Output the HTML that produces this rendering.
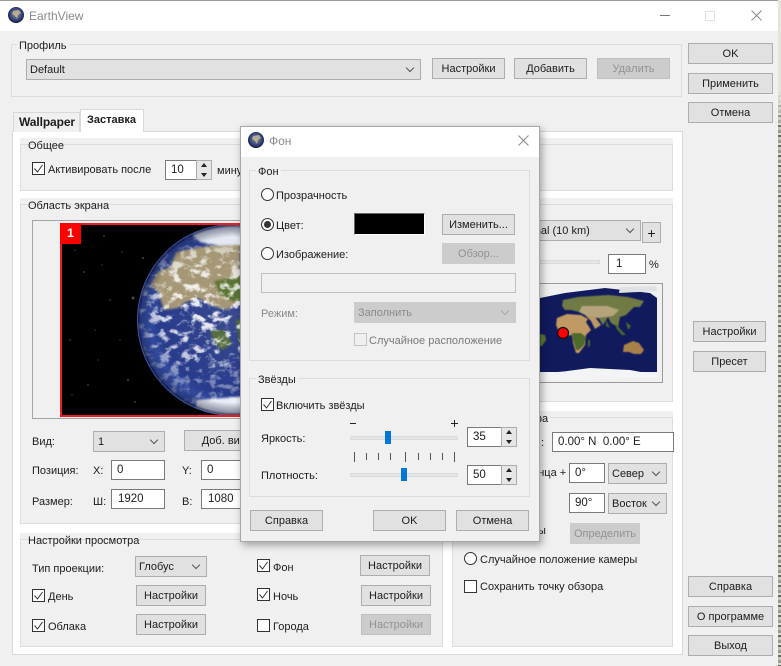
<!DOCTYPE html>
<html lang="ru"><head><meta charset="utf-8"><title>EarthView</title>
<style>
*{box-sizing:border-box}
html,body{margin:0;padding:0;width:781px;height:666px;overflow:hidden;background:#f0f0f0}
body{position:relative;font:11px/14px "Liberation Sans",sans-serif;color:#1c1c1c;filter:blur(.3px)}
div,span,svg{position:absolute}
.t{white-space:nowrap;line-height:14px;margin-top:1px}
.b{background:#e1e1e1;border:1px solid #adadad;text-align:center;line-height:21px;white-space:nowrap;color:#1c1c1c}
.d{background:#cccccc;border-color:#bfbfbf;color:#929292}
.c{background:#e1e1e1;border:1px solid #adadad;line-height:21px;padding-left:3px;white-space:nowrap;overflow:hidden}
.c:after{content:"";position:absolute;right:7px;top:5px;width:5px;height:5px;border-right:1px solid #555;border-bottom:1px solid #555;transform:rotate(45deg)}
.cd{background:#ccc;border-color:#ccc;color:#8a8a8a}.cd:after{border-color:#aaa}
.i{background:#fff;border:1px solid #7a7a7a;line-height:19px;padding-left:5px;white-space:nowrap;overflow:hidden;font-size:11.5px}
.f{background:#f0f0f0}
.g{border:1px solid #dcdcdc}
.l{background:#f0f0f0;padding:0 2px;white-space:nowrap}
.k{width:13px;height:13px;border:1px solid #333;background:#fff}
.k svg{left:0;top:0}
.r{width:13px;height:13px;border:1px solid #333;border-radius:50%;background:#fff}
.r i{position:absolute;left:2px;top:2px;width:7px;height:7px;border-radius:50%;background:#333}
.s{background:#e6e6e6;border:1px solid #adadad}
.s:before{content:"";position:absolute;left:4px;top:2px;border:3.5px solid transparent;border-top:0;border-bottom:4px solid #222}
.s:after{content:"";position:absolute;left:4px;top:12px;border:3.5px solid transparent;border-bottom:0;border-top:4px solid #222}
.tr{background:#e7e7e7;border:1px solid #dadada;height:4px}
.th{background:#0078d7;width:6px;height:13px}
.tk{background:#555;width:1px}
</style></head><body>

<!-- window -->
<div style="left:0;top:0;width:781px;height:1px;background:#9a9a9a"></div>
<div style="left:0;top:1px;width:778px;height:30px;background:#fff"></div>
<div style="left:778px;top:0;width:3px;height:666px;background:linear-gradient(180deg,#e4e4e0 0,#e4e4e0 90px,transparent 130px),repeating-linear-gradient(180deg,#9a9a8c 0 3px,#d8d8d0 3px 5px,#6b6b66 5px 7px,#c4c4ba 7px 10px)"></div>
<svg style="left:8px;top:7px" width="16" height="16"><defs><radialGradient id="ic" cx=".5" cy=".45" r=".55"><stop offset="0" stop-color="#8f8c70"/><stop offset=".6" stop-color="#3f4f86"/><stop offset="1" stop-color="#10163c"/></radialGradient></defs><circle cx="8" cy="8" r="8" fill="url(#ic)"/><path d="M5 4l6-1 2 3-3 2-1 4-2-3-3-2z" fill="#c9c09a" opacity=".75"/></svg>
<div class="t" style="left:29px;top:8px;color:#8a8a8a;font-size:12px">EarthView</div>
<div style="left:660px;top:15px;width:10px;height:1px;background:#777"></div>
<div style="left:705px;top:11px;width:10px;height:10px;border:1px solid #e0e0e0"></div>
<svg style="left:751px;top:10px" width="11" height="11"><path d="M.5.5l10 10M10.500.5l-10 10" stroke="#888" fill="none"/></svg>

<!-- profile -->
<div class="g" style="left:11px;top:44px;width:671px;height:53px"></div>
<div class="t l" style="left:17px;top:38px">Профиль</div>
<div class="c" style="left:26px;top:59px;width:395px;height:21px">Default</div>
<div class="b" style="left:432px;top:58px;width:73px;height:21px">Настройки</div>
<div class="b" style="left:514px;top:58px;width:73px;height:21px">Добавить</div>
<div class="b d" style="left:597px;top:58px;width:73px;height:21px">Удалить</div>

<div class="b" style="left:688px;top:43px;width:85px;height:21px">OK</div>
<div class="b" style="left:688px;top:73px;width:85px;height:21px">Применить</div>
<div class="b" style="left:688px;top:102px;width:85px;height:21px">Отмена</div>

<!-- tabs -->
<div style="left:12px;top:131px;width:671px;height:524px;background:#fff;border:1px solid #d9d9d9"></div>
<div style="left:13px;top:112px;width:67px;height:20px;background:#f0f0f0;border:1px solid #d9d9d9;border-bottom:0"></div>
<div class="t" style="left:19px;top:114px;font-weight:bold;font-size:12px;letter-spacing:-.1px">Wallpaper</div>
<div style="left:80px;top:109px;width:64px;height:23px;background:#fff;border:1px solid #d9d9d9;border-bottom:0"></div>
<div class="t" style="left:87px;top:112px;font-weight:bold;font-size:11px">Заставка</div>

<!-- Общее -->
<div class="f" style="left:20px;top:138px;width:653px;height:53px"></div>
<div class="g" style="left:20px;top:144px;width:653px;height:47px"></div>
<div class="t" style="left:28px;top:138px">Общее</div>
<div class="k" style="left:32px;top:162px"><svg width="11" height="11"><path d="M1.500 5.500l3 3.500 5-7" stroke="#333" fill="none"/></svg></div>
<div class="t" style="left:48px;top:162px">Активировать после</div>
<div class="i" style="left:165px;top:160px;width:33px;height:20px;border-right:0">10</div>
<div class="s" style="left:196px;top:160px;width:16px;height:20px"></div>
<div class="t" style="left:217px;top:163px">минут</div>

<!-- Область экрана -->
<div class="f" style="left:20px;top:198px;width:425px;height:326px"></div>
<div class="f" style="left:445px;top:198px;width:228px;height:204px"></div>
<div style="left:20px;top:204px;width:653px;height:1px;background:#dcdcdc"></div>
<div style="left:20px;top:204px;width:1px;height:320px;background:#dcdcdc"></div>
<div style="left:672px;top:204px;width:1px;height:198px;background:#dcdcdc"></div>
<div style="left:445px;top:401px;width:228px;height:1px;background:#dcdcdc"></div>
<div style="left:20px;top:523px;width:425px;height:1px;background:#dcdcdc"></div>
<div class="t" style="left:28px;top:198px">Область экрана</div>
<div style="left:32px;top:220px;width:260px;height:199px;border:1px solid #a5a5a5"></div>
<svg style="left:60px;top:223px" width="190" height="194" viewBox="60 223 190 194">
<defs>
<radialGradient id="e" gradientUnits="userSpaceOnUse" cx="240" cy="315" r="100"><stop offset="0" stop-color="#3a4b90"/><stop offset=".8" stop-color="#283b8c"/><stop offset="1" stop-color="#3a55ae"/></radialGradient>
<radialGradient id="sh" gradientUnits="userSpaceOnUse" cx="233" cy="320" r="96"><stop offset=".86" stop-color="#000" stop-opacity="0"/><stop offset=".96" stop-color="#0a1240" stop-opacity=".4"/><stop offset="1" stop-color="#000" stop-opacity=".9"/></radialGradient>
<radialGradient id="cm" gradientUnits="userSpaceOnUse" cx="205" cy="310" r="72"><stop offset="0" stop-color="#fff"/><stop offset=".6" stop-color="#ddd"/><stop offset="1" stop-color="#666"/></radialGradient>
<mask id="cmk" maskUnits="userSpaceOnUse" x="137" y="225" width="113" height="190"><rect x="137" y="225" width="113" height="190" fill="url(#cm)"/></mask>
<clipPath id="ec"><circle cx="233" cy="320" r="95"/></clipPath>
<filter id="cl" x="0" y="0" width="100%" height="100%"><feTurbulence type="fractalNoise" baseFrequency=".1 .13" numOctaves="4" seed="11"/><feColorMatrix values="0 0 0 0 1 0 0 0 0 1 0 0 0 0 1 5 0 0 0 -2.450"/></filter>
<filter id="bl"><feGaussianBlur stdDeviation="1"/></filter>
</defs>
<rect x="60" y="223" width="190" height="194" fill="#000"/>
<g fill="#8a8a8a"><circle cx="133" cy="298" r="1.500" fill="#4a4a4a"/><circle cx="143" cy="258" r=".7"/><circle cx="104" cy="236" r=".6"/><circle cx="84" cy="272" r=".6"/><circle cx="70" cy="340" r=".6"/><circle cx="110" cy="300" r=".6"/><circle cx="88" cy="385" r=".6"/><circle cx="128" cy="380" r=".7"/><circle cx="95" cy="330" r=".5"/><circle cx="120" cy="340" r=".5"/><circle cx="75" cy="250" r=".5"/><circle cx="135" cy="402" r=".6"/><circle cx="102" cy="265" r=".5"/><circle cx="72" cy="395" r=".5"/><circle cx="122" cy="252" r=".5"/><circle cx="98" cy="360" r=".5"/></g>
<circle cx="233" cy="320" r="96" fill="url(#e)"/>
<g clip-path="url(#ec)">
<path d="M150 285l8-14 12-4 6-15 18-4 46-6 0 60-14 8-12-4-16-8-12 4-8 6-14 2-6-18z" fill="#a69876" filter="url(#bl)"/>
<path d="M214 281l36-6 0 22-16 5-14-8z" fill="#5c7436" filter="url(#bl)"/>
<path d="M210 330l14 0 8 14-10 6-8-8z" fill="#56703c" filter="url(#bl)"/>
<path d="M236 320l14-2 0 26-10 2z" fill="#54703a" filter="url(#bl)"/>
<path d="M190 232l50-10 10 2 0 20-30 2-20-4z" fill="#e4e8f2" filter="url(#bl)"/>
<path d="M196 400l54-4 0 20-54 0z" fill="#e8ecf6" filter="url(#bl)"/>
<g mask="url(#cmk)"><rect x="137" y="225" width="113" height="190" filter="url(#cl)" opacity=".92"/></g>
<circle cx="233" cy="320" r="96" fill="url(#sh)"/>
</g>
</svg>
<div style="left:60px;top:223px;width:190px;height:194px;border:2px solid #ed1c24;border-right:0"></div>
<div style="left:60px;top:223px;width:21px;height:21px;background:#ff0000;color:#fff;font-weight:bold;font-size:12px;line-height:20px;text-align:center">1</div>

<div class="t" style="left:32px;top:434px">Вид:</div>
<div class="c" style="left:93px;top:431px;width:72px;height:21px;padding-left:4px">1</div>
<div class="b" style="left:184px;top:430px;width:80px;height:21px">Доб. вид</div>
<div class="t" style="left:32px;top:463px">Позиция:</div>
<div class="t" style="left:93px;top:463px">X:</div>
<div class="i" style="left:111px;top:460px;width:54px;height:20px">0</div>
<div class="t" style="left:182px;top:463px">Y:</div>
<div class="i" style="left:201px;top:460px;width:54px;height:20px">0</div>
<div class="t" style="left:32px;top:494px">Размер:</div>
<div class="t" style="left:93px;top:494px">Ш:</div>
<div class="i" style="left:111px;top:489px;width:54px;height:20px;padding-left:6px">1920</div>
<div class="t" style="left:182px;top:494px">В:</div>
<div class="i" style="left:201px;top:489px;width:54px;height:20px;padding-left:6px">1080</div>

<!-- Настройки просмотра -->
<div class="f" style="left:20px;top:533px;width:423px;height:114px"></div>
<div class="g" style="left:20px;top:539px;width:423px;height:108px"></div>
<div class="t" style="left:28px;top:533px">Настройки просмотра</div>
<div class="t" style="left:32px;top:561px">Тип проекции:</div>
<div class="c" style="left:135px;top:556px;width:72px;height:21px">Глобус</div>
<div class="k" style="left:32px;top:589px"><svg width="11" height="11"><path d="M1.500 5.500l3 3.500 5-7" stroke="#333" fill="none"/></svg></div>
<div class="t" style="left:48px;top:589px">День</div>
<div class="b" style="left:136px;top:585px;width:70px;height:21px">Настройки</div>
<div class="k" style="left:32px;top:619px"><svg width="11" height="11"><path d="M1.500 5.500l3 3.500 5-7" stroke="#333" fill="none"/></svg></div>
<div class="t" style="left:48px;top:619px">Облака</div>
<div class="b" style="left:136px;top:614px;width:70px;height:21px">Настройки</div>
<div class="k" style="left:257px;top:559px"><svg width="11" height="11"><path d="M1.500 5.500l3 3.500 5-7" stroke="#333" fill="none"/></svg></div>
<div class="t" style="left:273px;top:560px">Фон</div>
<div class="b" style="left:360px;top:555px;width:70px;height:21px">Настройки</div>
<div class="k" style="left:257px;top:588px"><svg width="11" height="11"><path d="M1.500 5.500l3 3.500 5-7" stroke="#333" fill="none"/></svg></div>
<div class="t" style="left:273px;top:589px">Ночь</div>
<div class="b" style="left:361px;top:585px;width:70px;height:21px">Настройки</div>
<div class="k" style="left:257px;top:619px"></div>
<div class="t" style="left:273px;top:619px">Города</div>
<div class="b d" style="left:361px;top:614px;width:70px;height:21px">Настройки</div>

<!-- right upper -->
<div class="c" style="left:500px;top:220px;width:141px;height:21px;padding-left:13px"><span style="position:static">Normal (10 km)</span></div>
<div class="b" style="left:642px;top:222px;width:19px;height:21px;font-size:14px">+</div>
<div class="tr" style="left:500px;top:260px;width:100px"></div>
<div class="i" style="left:608px;top:254px;width:38px;height:20px;padding-left:7px">1</div>
<div class="t" style="left:649px;top:257px">%</div>
<div style="left:500px;top:283px;width:163px;height:100px;background:#f0f0f0;border:1px solid #9a9a9a"></div>
<svg style="left:501px;top:284px" width="161" height="98" viewBox="501 284 161 98">
<defs><filter id="b2"><feGaussianBlur stdDeviation=".5"/></filter></defs>
<path d="M500 298l40 0 25-5 40-5 45 5 7 5 0 74-20 0-30-3-50 3-57 0z" fill="#121a5e"/>
<path d="M500 372l60 0 30-4 40 2 27 5 0 3-20 0-60 2-77 0z" fill="#f2f4f6"/>
<path d="M620 287l36-1 1 5-38 2z" fill="#dfe2e2"/>
<g filter="url(#b2)">
<path d="M563 300l15-3 30-2 20 2 16 4-4 6-6 0-8 8-6 2-2 10-7-4-3-6-5 8-5-8-6-2-8-2-5-1-8-2-6 0-3-4z" fill="#6f7a45"/>
<path d="M582 306l25 0 12 4-6 6-16 2-10-2-8-4z" fill="#b5a47a"/>
<path d="M557 318l10-4 14 1 7 4-2 3 5 8-5 5-1 10-6 8-3 0-3-10-1-8-6 1-7-4-3-7z" fill="#c09a62"/>
<path d="M572 333l9 0 5 4-2 8-5 5-3 0-3-10z" fill="#4e6a2a"/>
<path d="M585 315l10 2 6 8-6 4-4-8z" fill="#b89a66"/>
<path d="M624 345l9-4 6 2 5 7-3 4-7 0-5-2-6 0z" fill="#a8814a"/>
<path d="M540 334l5 1 1 5-4 6-2 0z" fill="#5c7a32"/>
<path d="M616 324l5 6 5 5-4 0-6-7zM626 322l5 4-3 4zM606 320l4 8-4-2z" fill="#4e6a2a"/>
<path d="M588 340l2 0 0 6-2 1z" fill="#4e6a2a"/>
</g>
<circle cx="563" cy="333" r="5.500" fill="#ff0000" stroke="#111" stroke-width="1.200"/>
</svg>

<div class="b" style="left:693px;top:321px;width:73px;height:21px">Настройки</div>
<div class="b" style="left:693px;top:351px;width:73px;height:21px">Пресет</div>

<!-- right lower -->
<div class="f" style="left:452px;top:411px;width:221px;height:236px"></div>
<div class="g" style="left:452px;top:417px;width:221px;height:230px"></div>
<div class="t l" style="left:479px;top:411px">Точка обзора</div>
<div class="t" style="left:541px;top:435px">:</div>
<div class="i" style="left:552px;top:432px;width:122px;height:20px;padding-left:5px">0.00° N&nbsp; 0.00° E</div>
<div class="t" style="left:478px;top:465px">Широта солнца +</div>
<div class="i" style="left:569px;top:463px;width:36px;height:20px">0°</div>
<div class="c" style="left:608px;top:463px;width:59px;height:21px">Север</div>
<div class="i" style="left:569px;top:493px;width:36px;height:20px">90°</div>
<div class="c" style="left:608px;top:493px;width:59px;height:21px">Восток</div>
<div class="t" style="left:484px;top:523px">Координаты</div>
<div class="b d" style="left:570px;top:523px;width:70px;height:21px;border-color:#ccc">Определить</div>
<div class="r" style="left:464px;top:552px"></div>
<div class="t" style="left:480px;top:552px">Случайное положение камеры</div>
<div class="k" style="left:464px;top:580px"></div>
<div class="t" style="left:480px;top:579px">Сохранить точку обзора</div>

<div class="b" style="left:688px;top:576px;width:85px;height:21px">Справка</div>
<div class="b" style="left:688px;top:606px;width:85px;height:21px">О программе</div>
<div class="b" style="left:688px;top:635px;width:85px;height:21px">Выход</div>

<!-- dialog -->
<div style="left:240px;top:126px;width:300px;height:416px;background:#f0f0f0;border:1px solid #a8a8a8;box-shadow:2px 3px 8px rgba(0,0,0,.35)"></div>
<div style="left:241px;top:127px;width:298px;height:30px;background:#fff"></div>
<svg style="left:248px;top:132px" width="16" height="16"><circle cx="8" cy="8" r="8" fill="url(#ic)"/><path d="M5 4l6-1 2 3-3 2-1 4-2-3-3-2z" fill="#c9c09a" opacity=".75"/></svg>
<div class="t" style="left:269px;top:133px;color:#8a8a8a;font-size:12px">Фон</div>
<svg style="left:518px;top:135px" width="11" height="11"><path d="M.5.5l10 10M10.500.5l-10 10" stroke="#888" fill="none"/></svg>

<div class="g" style="left:249px;top:170px;width:281px;height:191px"></div>
<div class="t l" style="left:256px;top:164px">Фон</div>
<div class="r" style="left:261px;top:188px"></div>
<div class="t" style="left:276px;top:188px">Прозрачность</div>
<div class="r" style="left:261px;top:218px"><i></i></div>
<div class="t" style="left:276px;top:218px">Цвет:</div>
<div style="left:354px;top:213px;width:71px;height:22px;background:#000;border:1px solid;border-color:#666 #fff #fff #666"></div>
<div class="b" style="left:442px;top:214px;width:73px;height:21px">Изменить...</div>
<div class="r" style="left:261px;top:247px"></div>
<div class="t" style="left:276px;top:247px">Изображение:</div>
<div class="b d" style="left:442px;top:243px;width:73px;height:21px;border-color:#ccc">Обзор...</div>
<div style="left:261px;top:273px;width:255px;height:20px;background:#f0f0f0;border:1px solid #bfbfbf"></div>
<div class="t" style="left:261px;top:306px;color:#8a8a8a">Режим:</div>
<div class="c cd" style="left:354px;top:302px;width:162px;height:21px">Заполнить</div>
<div class="k" style="left:354px;top:333px;border-color:#c4c4c4;background:#f0f0f0"></div>
<div class="t" style="left:369px;top:333px;color:#7a7a7a">Случайное расположение</div>

<div class="g" style="left:249px;top:378px;width:281px;height:119px"></div>
<div class="t l" style="left:256px;top:372px">Звёзды</div>
<div class="k" style="left:261px;top:398px"><svg width="11" height="11"><path d="M1.500 5.500l3 3.500 5-7" stroke="#333" fill="none"/></svg></div>
<div class="t" style="left:276px;top:398px">Включить звёзды</div>
<div style="left:350px;top:423px;width:6px;height:1px;background:#222"></div>
<div style="left:451px;top:423px;width:7px;height:1px;background:#222"></div>
<div style="left:454px;top:420px;width:1px;height:7px;background:#222"></div>
<div class="t" style="left:261px;top:431px">Яркость:</div>
<div class="tr" style="left:350px;top:436px;width:108px"></div>
<div class="th" style="left:385px;top:431px"></div>
<div class="i" style="left:467px;top:427px;width:34px;height:20px;border-right:0">35</div>
<div class="s" style="left:501px;top:427px;width:16px;height:20px"></div>
<div class="tk" style="left:354px;top:452px;height:10px"></div>
<div class="tk" style="left:366px;top:453px;height:7px"></div>
<div class="tk" style="left:378px;top:453px;height:7px"></div>
<div class="tk" style="left:390px;top:453px;height:7px"></div>
<div class="tk" style="left:405px;top:452px;height:10px"></div>
<div class="tk" style="left:418px;top:453px;height:7px"></div>
<div class="tk" style="left:430px;top:453px;height:7px"></div>
<div class="tk" style="left:442px;top:453px;height:7px"></div>
<div class="tk" style="left:454px;top:452px;height:10px"></div>
<div class="t" style="left:261px;top:468px">Плотность:</div>
<div class="tr" style="left:350px;top:473px;width:108px"></div>
<div class="th" style="left:401px;top:468px"></div>
<div class="i" style="left:467px;top:465px;width:34px;height:20px;border-right:0">50</div>
<div class="s" style="left:501px;top:465px;width:16px;height:20px"></div>

<div class="b" style="left:250px;top:510px;width:73px;height:21px">Справка</div>
<div class="b" style="left:373px;top:510px;width:73px;height:21px">OK</div>
<div class="b" style="left:456px;top:510px;width:73px;height:21px">Отмена</div>

</body></html>
